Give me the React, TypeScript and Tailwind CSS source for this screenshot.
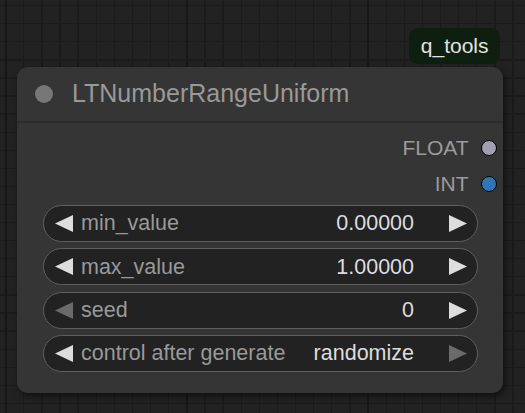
import React from 'react';

type Widget = {
    label: string;
    value: string;
    leftDim?: boolean;
    rightDim?: boolean;
};

const widgets: Widget[] = [
    { label: 'min_value', value: '0.00000' },
    { label: 'max_value', value: '1.00000' },
    { label: 'seed', value: '0', leftDim: true },
    { label: 'control after generate', value: 'randomize', rightDim: true },
];

const outputs = [
    { name: 'FLOAT', dot: 'bg-[#a09eb0]' },
    { name: 'INT', dot: 'bg-[#2f76b6]' },
];

function Arrow({ dir, dim }: { dir: 'left' | 'right'; dim?: boolean }) {
    const points = dir === 'left' ? '18,0 18,17 0,8.5' : '0,0 0,17 18,8.5';
    return (
        <svg width="18" height="17" viewBox="0 0 18 17" className="shrink-0">
            <polygon points={points} fill={dim ? '#6a6a6a' : '#dddddd'} />
        </svg>
    );
}

export default function App() {
    return (
        <div className="w-[525px] h-[413px] overflow-hidden bg-[#222222] [background-image:repeating-linear-gradient(to_right,#171717_0_2px,transparent_2px_181.2px),repeating-linear-gradient(to_right,#1b1b1b_0_1.3px,transparent_1.3px_18.12px),repeating-linear-gradient(to_bottom,#1b1b1b_0_1.3px,transparent_1.3px_18.08px)] [background-position:5px_0,5px_0,0_5px] font-['Liberation_Sans',Arial,sans-serif]">
            <div className="flex flex-col items-end w-[503px] pl-[17px] pt-[28px]">
                {/* Badge */}
                <div className="mr-[3px] mb-[3px] h-[36px] px-[11.5px] rounded-[9px] bg-[#0f1f0f] text-[#e2e2e2] text-[21px] flex items-center">
                    q_tools
                </div>

                {/* Node */}
                <div className="w-[486px] rounded-[11px] bg-[#353535] shadow-[2px_3px_7px_rgba(0,0,0,0.55)] flex flex-col">
                    {/* Title */}
                    <div className="h-[56px] border-b-2 border-[#2c2c2c] flex items-center pl-[18px]">
                        <div className="w-[18px] h-[18px] rounded-full bg-[#777777]" />
                        <span className="ml-[19px] text-[25px] text-[#999999]">LTNumberRangeUniform</span>
                    </div>

                    {/* Outputs */}
                    <div className="pt-[7px] flex flex-col">
                        {outputs.map((o) => (
                            <div key={o.name} className="h-[36px] flex items-center justify-end pr-[6.5px]">
                                <span className="text-[21px] text-[#9b9b9b]">{o.name}</span>
                                <div className={`ml-[12px] w-[16px] h-[16px] rounded-full border-[1.5px] border-black ${o.dot}`} />
                            </div>
                        ))}
                    </div>

                    {/* Widgets */}
                    <div className="mt-[3px] ml-[26px] mr-[25px] pb-[21px] flex flex-col gap-[6.3px]">
                        {widgets.map((w) => (
                            <div
                                key={w.label}
                                className="h-[37px] rounded-full border border-[#5f5f5f] bg-[#222222] flex items-center pl-[11px] pr-[10px] text-[21.5px]"
                            >
                                <Arrow dir="left" dim={w.leftDim} />
                                <span className="ml-[8px] flex-1 text-[#999999]">{w.label}</span>
                                <span className="text-[#dddddd]">{w.value}</span>
                                <div className="ml-[35px]">
                                    <Arrow dir="right" dim={w.rightDim} />
                                </div>
                            </div>
                        ))}
                    </div>
                </div>
            </div>
        </div>
    );
}
